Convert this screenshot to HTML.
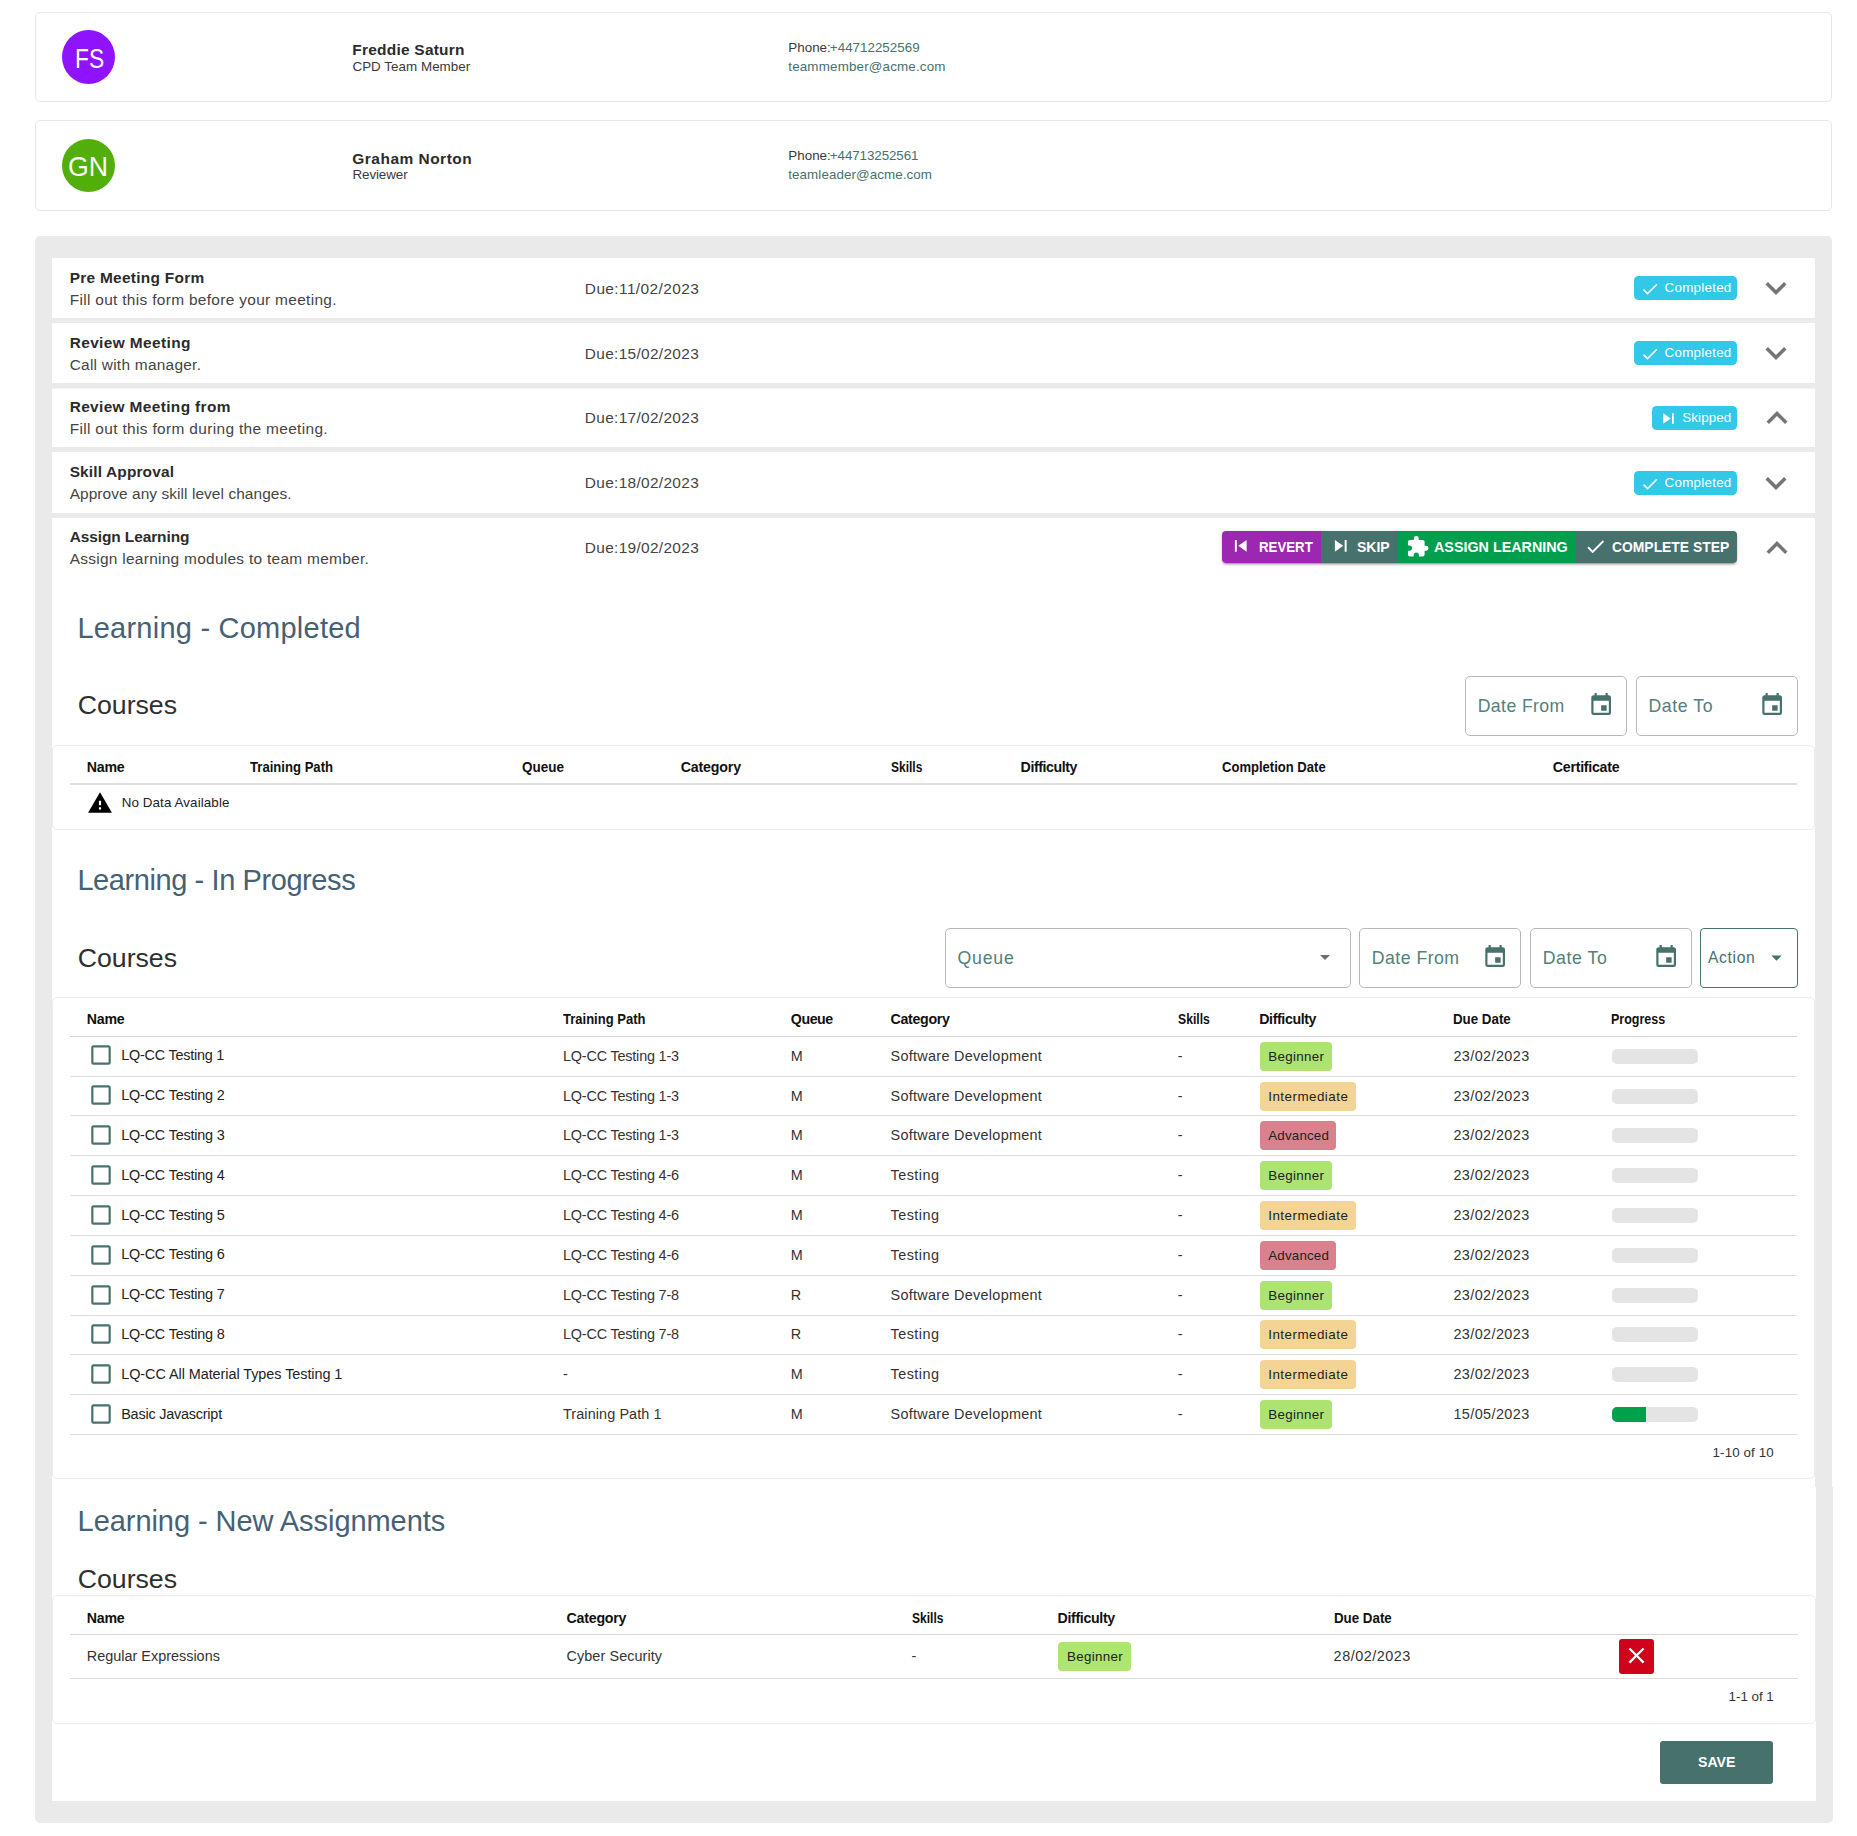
<!DOCTYPE html><html lang="en"><head><meta charset="utf-8"><title>CPD Review</title><style>
html,body{margin:0;padding:0;background:#fff}
body{width:1857px;height:1836px;position:relative;overflow:hidden;font-family:"Liberation Sans",sans-serif;}
.b{position:absolute;box-sizing:border-box}
.t{position:absolute;white-space:pre;line-height:1;margin:0;padding:0}
</style></head><body>
<div class="b" style="left:35px;top:12px;width:1797px;height:90px;background:#fff;border:1px solid #e7e7e7;border-radius:5px;"></div>
<div class="b" style="left:35px;top:120px;width:1797px;height:91px;background:#fff;border:1px solid #e7e7e7;border-radius:5px;"></div>
<div class="b" style="left:62px;top:30px;width:53px;height:54px;border-radius:50%;background:#9013fe;"></div>
<div class="b" style="left:62px;top:139px;width:53px;height:53px;border-radius:50%;background:#52ae0b;"></div>
<div class="b" style="left:35px;top:236px;width:1797px;height:1251px;background:#eaeaea;border-radius:5px 5px 0 0;"></div>
<div class="b" style="left:35px;top:1487px;width:1798px;height:336px;background:#eaeaea;border-radius:0 0 5px 5px;"></div>
<div class="b" style="left:52px;top:258px;width:1763px;height:60px;background:#fff;"></div>
<div class="b" style="left:52px;top:323px;width:1763px;height:60px;background:#fff;"></div>
<div class="b" style="left:52px;top:388px;width:1763px;height:59px;background:#fff;"></div>
<div class="b" style="left:52px;top:452px;width:1763px;height:61px;background:#fff;"></div>
<div class="b" style="left:52px;top:518px;width:1763px;height:1283px;background:#fff;"></div>
<div class="b" style="left:52px;top:1487px;width:1764px;height:314px;background:#fff;"></div>
<div class="b" style="left:52px;top:388px;width:1763px;height:1px;background:#f4f4f4;"></div>
<div class="b" style="left:1634px;top:276px;width:103px;height:24px;background:#32c8e8;border-radius:4.5px;"></div>
<svg class="b" style="left:1640.2px;top:278.5px;" width="20" height="20" viewBox="0 0 24 24"><path fill="#fff" d="M21,7L9,19L3.5,13.5L4.91,12.09L9,16.17L19.59,5.59L21,7Z"/></svg>
<svg class="b" style="left:1755px;top:267.4px;" width="42" height="42" viewBox="0 0 24 24"><path fill="#757575" d="M7.41,8.58L12,13.17L16.59,8.58L18,10L12,16L6,10L7.41,8.58Z"/></svg>
<div class="b" style="left:1634px;top:341px;width:103px;height:24px;background:#32c8e8;border-radius:4.5px;"></div>
<svg class="b" style="left:1640.2px;top:343.5px;" width="20" height="20" viewBox="0 0 24 24"><path fill="#fff" d="M21,7L9,19L3.5,13.5L4.91,12.09L9,16.17L19.59,5.59L21,7Z"/></svg>
<svg class="b" style="left:1755px;top:332.4px;" width="42" height="42" viewBox="0 0 24 24"><path fill="#757575" d="M7.41,8.58L12,13.17L16.59,8.58L18,10L12,16L6,10L7.41,8.58Z"/></svg>
<div class="b" style="left:1652px;top:406px;width:85px;height:24px;background:#32c8e8;border-radius:4.5px;"></div>
<svg class="b" style="left:1657.8px;top:407.5px;" width="21" height="21" viewBox="0 0 24 24"><path fill="#fff" d="M16,18H18V6H16M6,18L14.5,12L6,6V18Z"/></svg>
<svg class="b" style="left:1755.8px;top:396.7px;" width="42" height="42" viewBox="0 0 24 24"><path fill="#757575" d="M7.41,15.41L12,10.83L16.59,15.41L18,14L12,8L6,14L7.41,15.41Z"/></svg>
<div class="b" style="left:1634px;top:471px;width:103px;height:24px;background:#32c8e8;border-radius:4.5px;"></div>
<svg class="b" style="left:1640.2px;top:473.5px;" width="20" height="20" viewBox="0 0 24 24"><path fill="#fff" d="M21,7L9,19L3.5,13.5L4.91,12.09L9,16.17L19.59,5.59L21,7Z"/></svg>
<svg class="b" style="left:1755px;top:462.4px;" width="42" height="42" viewBox="0 0 24 24"><path fill="#757575" d="M7.41,8.58L12,13.17L16.59,8.58L18,10L12,16L6,10L7.41,8.58Z"/></svg>
<svg class="b" style="left:1755.8px;top:526.9px;" width="42" height="42" viewBox="0 0 24 24"><path fill="#757575" d="M7.41,15.41L12,10.83L16.59,15.41L18,14L12,8L6,14L7.41,15.41Z"/></svg>
<div class="b" style="left:1222px;top:531px;width:515px;height:32px;border-radius:4px;box-shadow:0 3px 1px -2px rgba(0,0,0,.2),0 2px 2px 0 rgba(0,0,0,.14),0 1px 5px 0 rgba(0,0,0,.12);"></div>
<div class="b" style="left:1222px;top:531px;width:99px;height:32px;background:#9c27b0;border-radius:4px 0 0 4px;"></div>
<div class="b" style="left:1321px;top:531px;width:77px;height:32px;background:#47716d;"></div>
<div class="b" style="left:1398px;top:531px;width:178px;height:32px;background:#009e4d;"></div>
<div class="b" style="left:1576px;top:531px;width:161px;height:32px;background:#47716d;border-radius:0 4px 4px 0;"></div>
<svg class="b" style="left:1229.3px;top:534.3px;" width="23.5" height="23.5" viewBox="0 0 24 24"><path fill="#fff" d="M6,18V6H8V18H6M9.5,12L18,6V18L9.5,12Z"/></svg>
<svg class="b" style="left:1328.6px;top:534.3px;" width="23.5" height="23.5" viewBox="0 0 24 24"><path fill="#fff" d="M16,18H18V6H16M6,18L14.5,12L6,6V18Z"/></svg>
<svg class="b" style="left:1406.2px;top:534.7px;" width="23.5" height="23.5" viewBox="0 0 24 24"><path fill="#fff" d="M20.5,11H19V7C19,5.89 18.1,5 17,5H13V3.5A2.5,2.5 0 0,0 10.5,1A2.5,2.5 0 0,0 8,3.5V5H4A2,2 0 0,0 2,7V10.8H3.5C5,10.8 6.2,12 6.2,13.5C6.2,15 5,16.2 3.5,16.2H2V20A2,2 0 0,0 4,22H7.8V20.5C7.8,19 9,17.8 10.5,17.8C12,17.8 13.2,19 13.2,20.5V22H17A2,2 0 0,0 19,20V16H20.5A2.5,2.5 0 0,0 23,13.5A2.5,2.5 0 0,0 20.5,11Z"/></svg>
<svg class="b" style="left:1584px;top:534.5px;" width="23" height="23" viewBox="0 0 24 24"><path fill="#fff" d="M21,7L9,19L3.5,13.5L4.91,12.09L9,16.17L19.59,5.59L21,7Z"/></svg>
<div class="b" style="left:1465px;top:676px;width:162px;height:60px;border:1px solid #b8b8b8;border-radius:5px;background:#fff;"></div>
<svg class="b" style="left:1588.2px;top:691.8px;" width="26.3" height="26.3" viewBox="0 0 24 24"><path fill="#47716d" d="M19,19H5V8H19M16,1V3H8V1H6V3H5C3.89,3 3,3.89 3,5V19A2,2 0 0,0 5,21H19A2,2 0 0,0 21,19V5C21,3.89 20.1,3 19,3H18V1M17,12H12V17H17V12Z"/></svg>
<div class="b" style="left:1636px;top:676px;width:162px;height:60px;border:1px solid #b8b8b8;border-radius:5px;background:#fff;"></div>
<svg class="b" style="left:1759.2px;top:691.8px;" width="26.3" height="26.3" viewBox="0 0 24 24"><path fill="#47716d" d="M19,19H5V8H19M16,1V3H8V1H6V3H5C3.89,3 3,3.89 3,5V19A2,2 0 0,0 5,21H19A2,2 0 0,0 21,19V5C21,3.89 20.1,3 19,3H18V1M17,12H12V17H17V12Z"/></svg>
<div class="b" style="left:52px;top:745px;width:1763px;height:85px;border:1px solid #ececec;border-radius:5px;background:#fff;"></div>
<div class="b" style="left:70px;top:783px;width:1727px;height:2px;background:#dedede;"></div>
<svg class="b" style="left:87.4px;top:789.6px;" width="26" height="26" viewBox="0 0 24 24"><path fill="#000" d="M13,14H11V10H13M13,18H11V16H13M1,21H23L12,2L1,21Z"/></svg>
<div class="b" style="left:945px;top:928px;width:406px;height:60px;border:1px solid #b8b8b8;border-radius:5px;background:#fff;"></div>
<svg class="b" style="left:1313px;top:944.7px;" width="24" height="24" viewBox="0 0 24 24"><path fill="#6e6e6e" d="M7,10L12,15L17,10H7Z"/></svg>
<div class="b" style="left:1359px;top:928px;width:162px;height:60px;border:1px solid #b8b8b8;border-radius:5px;background:#fff;"></div>
<svg class="b" style="left:1482.2px;top:943.8px;" width="26.3" height="26.3" viewBox="0 0 24 24"><path fill="#47716d" d="M19,19H5V8H19M16,1V3H8V1H6V3H5C3.89,3 3,3.89 3,5V19A2,2 0 0,0 5,21H19A2,2 0 0,0 21,19V5C21,3.89 20.1,3 19,3H18V1M17,12H12V17H17V12Z"/></svg>
<div class="b" style="left:1530px;top:928px;width:162px;height:60px;border:1px solid #b8b8b8;border-radius:5px;background:#fff;"></div>
<svg class="b" style="left:1653.2px;top:943.8px;" width="26.3" height="26.3" viewBox="0 0 24 24"><path fill="#47716d" d="M19,19H5V8H19M16,1V3H8V1H6V3H5C3.89,3 3,3.89 3,5V19A2,2 0 0,0 5,21H19A2,2 0 0,0 21,19V5C21,3.89 20.1,3 19,3H18V1M17,12H12V17H17V12Z"/></svg>
<div class="b" style="left:1700px;top:928px;width:98px;height:60px;border:1px solid #47716d;border-radius:4px;background:#fff;"></div>
<svg class="b" style="left:1763.8px;top:944.5px;" width="25" height="25" viewBox="0 0 24 24"><path fill="#47716d" d="M7,10L12,15L17,10H7Z"/></svg>
<div class="b" style="left:52px;top:997px;width:1763px;height:482px;border:1px solid #ececec;border-radius:5px;background:#fff;"></div>
<div class="b" style="left:70px;top:1036px;width:1727px;height:1px;background:#d4d4d4;"></div>
<div class="b" style="left:70px;top:1076px;width:1727px;height:1px;background:#dcdcdc;"></div>
<svg class="b" style="left:87.7px;top:1041.9px;" width="26" height="26" viewBox="0 0 24 24"><path fill="#47716d" d="M19,3H5C3.89,3 3,3.89 3,5V19A2,2 0 0,0 5,21H19A2,2 0 0,0 21,19V5C21,3.89 20.1,3 19,3M19,5V19H5V5H19Z"/></svg>
<div class="b" style="left:1260px;top:1042px;width:72px;height:29px;background:#ace371;border-radius:4px;"></div>
<div class="b" style="left:1612px;top:1049px;width:86px;height:15px;background:#e4e4e4;border-radius:5px;overflow:hidden;"></div>
<div class="b" style="left:70px;top:1115px;width:1727px;height:1px;background:#dcdcdc;"></div>
<svg class="b" style="left:87.7px;top:1081.8px;" width="26" height="26" viewBox="0 0 24 24"><path fill="#47716d" d="M19,3H5C3.89,3 3,3.89 3,5V19A2,2 0 0,0 5,21H19A2,2 0 0,0 21,19V5C21,3.89 20.1,3 19,3M19,5V19H5V5H19Z"/></svg>
<div class="b" style="left:1260px;top:1082px;width:96px;height:29px;background:#f3d494;border-radius:4px;"></div>
<div class="b" style="left:1612px;top:1089px;width:86px;height:15px;background:#e4e4e4;border-radius:5px;overflow:hidden;"></div>
<div class="b" style="left:70px;top:1155px;width:1727px;height:1px;background:#dcdcdc;"></div>
<svg class="b" style="left:87.7px;top:1121.8px;" width="26" height="26" viewBox="0 0 24 24"><path fill="#47716d" d="M19,3H5C3.89,3 3,3.89 3,5V19A2,2 0 0,0 5,21H19A2,2 0 0,0 21,19V5C21,3.89 20.1,3 19,3M19,5V19H5V5H19Z"/></svg>
<div class="b" style="left:1260px;top:1121px;width:76px;height:29px;background:#d9828d;border-radius:4px;"></div>
<div class="b" style="left:1612px;top:1128px;width:86px;height:15px;background:#e4e4e4;border-radius:5px;overflow:hidden;"></div>
<div class="b" style="left:70px;top:1195px;width:1727px;height:1px;background:#dcdcdc;"></div>
<svg class="b" style="left:87.7px;top:1161.7px;" width="26" height="26" viewBox="0 0 24 24"><path fill="#47716d" d="M19,3H5C3.89,3 3,3.89 3,5V19A2,2 0 0,0 5,21H19A2,2 0 0,0 21,19V5C21,3.89 20.1,3 19,3M19,5V19H5V5H19Z"/></svg>
<div class="b" style="left:1260px;top:1161px;width:72px;height:29px;background:#ace371;border-radius:4px;"></div>
<div class="b" style="left:1612px;top:1168px;width:86px;height:15px;background:#e4e4e4;border-radius:5px;overflow:hidden;"></div>
<div class="b" style="left:70px;top:1235px;width:1727px;height:1px;background:#dcdcdc;"></div>
<svg class="b" style="left:87.7px;top:1201.6px;" width="26" height="26" viewBox="0 0 24 24"><path fill="#47716d" d="M19,3H5C3.89,3 3,3.89 3,5V19A2,2 0 0,0 5,21H19A2,2 0 0,0 21,19V5C21,3.89 20.1,3 19,3M19,5V19H5V5H19Z"/></svg>
<div class="b" style="left:1260px;top:1201px;width:96px;height:29px;background:#f3d494;border-radius:4px;"></div>
<div class="b" style="left:1612px;top:1208px;width:86px;height:15px;background:#e4e4e4;border-radius:5px;overflow:hidden;"></div>
<div class="b" style="left:70px;top:1275px;width:1727px;height:1px;background:#dcdcdc;"></div>
<svg class="b" style="left:87.7px;top:1241.6px;" width="26" height="26" viewBox="0 0 24 24"><path fill="#47716d" d="M19,3H5C3.89,3 3,3.89 3,5V19A2,2 0 0,0 5,21H19A2,2 0 0,0 21,19V5C21,3.89 20.1,3 19,3M19,5V19H5V5H19Z"/></svg>
<div class="b" style="left:1260px;top:1241px;width:76px;height:29px;background:#d9828d;border-radius:4px;"></div>
<div class="b" style="left:1612px;top:1248px;width:86px;height:15px;background:#e4e4e4;border-radius:5px;overflow:hidden;"></div>
<div class="b" style="left:70px;top:1315px;width:1727px;height:1px;background:#dcdcdc;"></div>
<svg class="b" style="left:87.7px;top:1281.5px;" width="26" height="26" viewBox="0 0 24 24"><path fill="#47716d" d="M19,3H5C3.89,3 3,3.89 3,5V19A2,2 0 0,0 5,21H19A2,2 0 0,0 21,19V5C21,3.89 20.1,3 19,3M19,5V19H5V5H19Z"/></svg>
<div class="b" style="left:1260px;top:1281px;width:72px;height:29px;background:#ace371;border-radius:4px;"></div>
<div class="b" style="left:1612px;top:1288px;width:86px;height:15px;background:#e4e4e4;border-radius:5px;overflow:hidden;"></div>
<div class="b" style="left:70px;top:1354px;width:1727px;height:1px;background:#dcdcdc;"></div>
<svg class="b" style="left:87.7px;top:1321.4px;" width="26" height="26" viewBox="0 0 24 24"><path fill="#47716d" d="M19,3H5C3.89,3 3,3.89 3,5V19A2,2 0 0,0 5,21H19A2,2 0 0,0 21,19V5C21,3.89 20.1,3 19,3M19,5V19H5V5H19Z"/></svg>
<div class="b" style="left:1260px;top:1320px;width:96px;height:29px;background:#f3d494;border-radius:4px;"></div>
<div class="b" style="left:1612px;top:1327px;width:86px;height:15px;background:#e4e4e4;border-radius:5px;overflow:hidden;"></div>
<div class="b" style="left:70px;top:1394px;width:1727px;height:1px;background:#dcdcdc;"></div>
<svg class="b" style="left:87.7px;top:1361.3px;" width="26" height="26" viewBox="0 0 24 24"><path fill="#47716d" d="M19,3H5C3.89,3 3,3.89 3,5V19A2,2 0 0,0 5,21H19A2,2 0 0,0 21,19V5C21,3.89 20.1,3 19,3M19,5V19H5V5H19Z"/></svg>
<div class="b" style="left:1260px;top:1360px;width:96px;height:29px;background:#f3d494;border-radius:4px;"></div>
<div class="b" style="left:1612px;top:1367px;width:86px;height:15px;background:#e4e4e4;border-radius:5px;overflow:hidden;"></div>
<div class="b" style="left:70px;top:1434px;width:1727px;height:1px;background:#dcdcdc;"></div>
<svg class="b" style="left:87.7px;top:1401.3px;" width="26" height="26" viewBox="0 0 24 24"><path fill="#47716d" d="M19,3H5C3.89,3 3,3.89 3,5V19A2,2 0 0,0 5,21H19A2,2 0 0,0 21,19V5C21,3.89 20.1,3 19,3M19,5V19H5V5H19Z"/></svg>
<div class="b" style="left:1260px;top:1400px;width:72px;height:29px;background:#ace371;border-radius:4px;"></div>
<div class="b" style="left:1612px;top:1407px;width:86px;height:15px;background:#e4e4e4;border-radius:5px;overflow:hidden;"><div style="width:34px;height:100%;background:#00a04c"></div></div>
<div class="b" style="left:52px;top:1595px;width:1764px;height:129px;border:1px solid #ececec;border-radius:5px;background:#fff;"></div>
<div class="b" style="left:70px;top:1634px;width:1728px;height:1px;background:#d8d8d8;"></div>
<div class="b" style="left:1058px;top:1642px;width:73px;height:29px;background:#ace56f;border-radius:4px;"></div>
<div class="b" style="left:1619px;top:1639px;width:35px;height:35px;background:#d0021b;border-radius:3px;"></div>
<svg class="b" style="left:1622.6px;top:1642.4px;" width="27" height="27" viewBox="0 0 24 24"><path fill="#fff" d="M19,6.41L17.59,5L12,10.59L6.41,5L5,6.41L10.59,12L5,17.59L6.41,19L12,13.41L17.59,19L19,17.59L13.41,12L19,6.41Z"/></svg>
<div class="b" style="left:70px;top:1678px;width:1728px;height:1px;background:#dcdcdc;"></div>
<div class="b" style="left:1660px;top:1741px;width:113px;height:43px;background:#47716d;border-radius:3px;"></div>
<span class="t" style="left:74.98px;top:45.01px;font-size:27.6px;color:#fff;transform-origin:0 0;transform:scaleX(0.8248);">FS</span>
<span class="t" style="left:68.28px;top:153.01px;font-size:27.6px;color:#fff;transform-origin:0 0;transform:scaleX(0.9661);">GN</span>
<span class="t" style="left:352.35px;top:41.90px;font-size:15.45px;color:#2b2b2b;font-weight:700;letter-spacing:0.244px;">Freddie Saturn</span>
<span class="t" style="left:352.46px;top:60.01px;font-size:13.39px;color:#3a3a3a;letter-spacing:0.040px;">CPD Team Member</span>
<span class="t" style="left:788.26px;top:40.71px;font-size:13.39px;color:#3a3a3a;letter-spacing:0.027px;">Phone:</span>
<span class="t" style="left:829.86px;top:40.71px;font-size:13.39px;color:#47716d;letter-spacing:0.009px;">+44712252569</span>
<span class="t" style="left:788.26px;top:60.01px;font-size:13.39px;color:#47716d;letter-spacing:0.177px;">teammember@acme.com</span>
<span class="t" style="left:352.35px;top:150.90px;font-size:15.45px;color:#2b2b2b;font-weight:700;letter-spacing:0.507px;">Graham Norton</span>
<span class="t" style="left:352.46px;top:167.81px;font-size:13.39px;color:#3a3a3a;letter-spacing:-0.087px;">Reviewer</span>
<span class="t" style="left:788.26px;top:148.90px;font-size:13.39px;color:#3a3a3a;letter-spacing:0.027px;">Phone:</span>
<span class="t" style="left:829.86px;top:148.90px;font-size:13.39px;color:#47716d;letter-spacing:-0.091px;">+44713252561</span>
<span class="t" style="left:788.26px;top:167.81px;font-size:13.39px;color:#47716d;letter-spacing:0.086px;">teamleader@acme.com</span>
<span class="t" style="left:69.65px;top:269.70px;font-size:15.45px;color:#2b2b2b;font-weight:700;letter-spacing:0.275px;">Pre Meeting Form</span>
<span class="t" style="left:69.65px;top:291.81px;font-size:15.45px;color:#444;letter-spacing:0.318px;">Fill out this form before your meeting.</span>
<span class="t" style="left:584.85px;top:280.81px;font-size:15.45px;color:#444;letter-spacing:0.398px;">Due:11/02/2023</span>
<span class="t" style="left:69.65px;top:334.81px;font-size:15.45px;color:#2b2b2b;font-weight:700;letter-spacing:0.384px;">Review Meeting</span>
<span class="t" style="left:69.65px;top:356.90px;font-size:15.45px;color:#444;letter-spacing:0.253px;">Call with manager.</span>
<span class="t" style="left:584.85px;top:345.90px;font-size:15.45px;color:#444;letter-spacing:0.310px;">Due:15/02/2023</span>
<span class="t" style="left:69.65px;top:398.81px;font-size:15.45px;color:#2b2b2b;font-weight:700;letter-spacing:0.356px;">Review Meeting from</span>
<span class="t" style="left:69.65px;top:420.90px;font-size:15.45px;color:#444;letter-spacing:0.341px;">Fill out this form during the meeting.</span>
<span class="t" style="left:584.85px;top:409.90px;font-size:15.45px;color:#444;letter-spacing:0.310px;">Due:17/02/2023</span>
<span class="t" style="left:69.65px;top:463.76px;font-size:15.45px;color:#2b2b2b;font-weight:700;letter-spacing:0.149px;">Skill Approval</span>
<span class="t" style="left:69.65px;top:485.85px;font-size:15.45px;color:#444;letter-spacing:0.072px;">Approve any skill level changes.</span>
<span class="t" style="left:584.85px;top:474.85px;font-size:15.45px;color:#444;letter-spacing:0.310px;">Due:18/02/2023</span>
<span class="t" style="left:69.65px;top:528.81px;font-size:15.45px;color:#2b2b2b;font-weight:700;letter-spacing:-0.082px;">Assign Learning</span>
<span class="t" style="left:69.65px;top:550.90px;font-size:15.45px;color:#444;letter-spacing:0.284px;">Assign learning modules to team member.</span>
<span class="t" style="left:584.85px;top:539.90px;font-size:15.45px;color:#444;letter-spacing:0.310px;">Due:19/02/2023</span>
<span class="t" style="left:1664.56px;top:281.40px;font-size:13.39px;color:#fff;letter-spacing:0.257px;">Completed</span>
<span class="t" style="left:1664.56px;top:346.40px;font-size:13.39px;color:#fff;letter-spacing:0.257px;">Completed</span>
<span class="t" style="left:1682.16px;top:411.21px;font-size:13.39px;color:#fff;letter-spacing:0.133px;">Skipped</span>
<span class="t" style="left:1664.56px;top:476.40px;font-size:13.39px;color:#fff;letter-spacing:0.257px;">Completed</span>
<span class="t" style="left:1258.96px;top:538.60px;font-size:15.3px;color:#fff;font-weight:700;transform-origin:0 0;transform:scaleX(0.8669);">REVERT</span>
<span class="t" style="left:1357.46px;top:538.60px;font-size:15.3px;color:#fff;font-weight:700;transform-origin:0 0;transform:scaleX(0.9156);">SKIP</span>
<span class="t" style="left:1434.46px;top:538.60px;font-size:15.3px;color:#fff;font-weight:700;transform-origin:0 0;transform:scaleX(0.9363);">ASSIGN LEARNING</span>
<span class="t" style="left:1612.26px;top:538.60px;font-size:15.3px;color:#fff;font-weight:700;transform-origin:0 0;transform:scaleX(0.9071);">COMPLETE STEP</span>
<span class="t" style="left:77.41px;top:614.11px;font-size:29px;color:#466173;letter-spacing:0.230px;">Learning - Completed</span>
<span class="t" style="left:77.73px;top:692.31px;font-size:26.7px;color:#2f2f2f;letter-spacing:-0.017px;">Courses</span>
<span class="t" style="left:1477.73px;top:698.11px;font-size:17.7px;color:#52807a;letter-spacing:0.382px;">Date From</span>
<span class="t" style="left:1648.43px;top:698.11px;font-size:17.7px;color:#52807a;letter-spacing:0.593px;">Date To</span>
<span class="t" style="left:86.82px;top:760.20px;font-size:14.2px;color:#111;font-weight:700;letter-spacing:-0.270px;">Name</span>
<span class="t" style="left:250.02px;top:760.20px;font-size:14.2px;color:#111;font-weight:700;transform-origin:0 0;transform:scaleX(0.9240);">Training Path</span>
<span class="t" style="left:521.92px;top:760.20px;font-size:14.2px;color:#111;font-weight:700;transform-origin:0 0;transform:scaleX(0.9499);">Queue</span>
<span class="t" style="left:680.72px;top:760.20px;font-size:14.2px;color:#111;font-weight:700;letter-spacing:-0.165px;">Category</span>
<span class="t" style="left:890.52px;top:760.20px;font-size:14.2px;color:#111;font-weight:700;transform-origin:0 0;transform:scaleX(0.8454);">Skills</span>
<span class="t" style="left:1020.62px;top:760.20px;font-size:14.2px;color:#111;font-weight:700;letter-spacing:-0.440px;">Difficulty</span>
<span class="t" style="left:1221.82px;top:760.20px;font-size:14.2px;color:#111;font-weight:700;transform-origin:0 0;transform:scaleX(0.9195);">Completion Date</span>
<span class="t" style="left:1552.82px;top:760.20px;font-size:14.2px;color:#111;font-weight:700;letter-spacing:-0.264px;">Certificate</span>
<span class="t" style="left:121.66px;top:795.71px;font-size:13.39px;color:#222;letter-spacing:0.104px;">No Data Available</span>
<span class="t" style="left:77.41px;top:866.01px;font-size:29px;color:#466173;letter-spacing:-0.413px;">Learning - In Progress</span>
<span class="t" style="left:77.73px;top:945.31px;font-size:26.7px;color:#2f2f2f;letter-spacing:-0.017px;">Courses</span>
<span class="t" style="left:957.53px;top:950.00px;font-size:17.7px;color:#52807a;letter-spacing:0.773px;">Queue</span>
<span class="t" style="left:1371.83px;top:950.11px;font-size:17.7px;color:#52807a;letter-spacing:0.457px;">Date From</span>
<span class="t" style="left:1542.63px;top:950.11px;font-size:17.7px;color:#52807a;letter-spacing:0.593px;">Date To</span>
<span class="t" style="left:1708.04px;top:949.91px;font-size:15.7px;color:#47716d;letter-spacing:0.626px;">Action</span>
<span class="t" style="left:86.82px;top:1011.90px;font-size:14.2px;color:#111;font-weight:700;letter-spacing:-0.270px;">Name</span>
<span class="t" style="left:563.02px;top:1011.90px;font-size:14.2px;color:#111;font-weight:700;transform-origin:0 0;transform:scaleX(0.9173);">Training Path</span>
<span class="t" style="left:790.82px;top:1011.90px;font-size:14.2px;color:#111;font-weight:700;letter-spacing:-0.428px;">Queue</span>
<span class="t" style="left:890.52px;top:1011.90px;font-size:14.2px;color:#111;font-weight:700;letter-spacing:-0.293px;">Category</span>
<span class="t" style="left:1177.82px;top:1011.90px;font-size:14.2px;color:#111;font-weight:700;transform-origin:0 0;transform:scaleX(0.8589);">Skills</span>
<span class="t" style="left:1259.22px;top:1011.90px;font-size:14.2px;color:#111;font-weight:700;letter-spacing:-0.384px;">Difficulty</span>
<span class="t" style="left:1453.42px;top:1011.90px;font-size:14.2px;color:#111;font-weight:700;transform-origin:0 0;transform:scaleX(0.9390);">Due Date</span>
<span class="t" style="left:1611.22px;top:1011.90px;font-size:14.2px;color:#111;font-weight:700;transform-origin:0 0;transform:scaleX(0.8818);">Progress</span>
<span class="t" style="left:121.21px;top:1048.01px;font-size:14.42px;color:#222;letter-spacing:-0.226px;">LQ-CC Testing 1</span>
<span class="t" style="left:563.01px;top:1048.81px;font-size:14.42px;color:#333;letter-spacing:-0.186px;">LQ-CC Testing 1-3</span>
<span class="t" style="left:790.81px;top:1048.81px;font-size:14.42px;color:#333;">M</span>
<span class="t" style="left:890.51px;top:1048.81px;font-size:14.42px;color:#333;letter-spacing:0.296px;">Software Development</span>
<span class="t" style="left:1177.81px;top:1048.81px;font-size:14.42px;color:#333;">-</span>
<span class="t" style="left:1268.26px;top:1049.81px;font-size:13.39px;color:#222;letter-spacing:0.299px;">Beginner</span>
<span class="t" style="left:1453.41px;top:1048.81px;font-size:14.42px;color:#333;letter-spacing:0.407px;">23/02/2023</span>
<span class="t" style="left:121.21px;top:1087.89px;font-size:14.42px;color:#222;letter-spacing:-0.190px;">LQ-CC Testing 2</span>
<span class="t" style="left:563.01px;top:1088.59px;font-size:14.42px;color:#333;letter-spacing:-0.186px;">LQ-CC Testing 1-3</span>
<span class="t" style="left:790.81px;top:1088.59px;font-size:14.42px;color:#333;">M</span>
<span class="t" style="left:890.51px;top:1088.59px;font-size:14.42px;color:#333;letter-spacing:0.296px;">Software Development</span>
<span class="t" style="left:1177.81px;top:1088.59px;font-size:14.42px;color:#333;">-</span>
<span class="t" style="left:1268.26px;top:1089.60px;font-size:13.39px;color:#222;letter-spacing:0.480px;">Intermediate</span>
<span class="t" style="left:1453.41px;top:1088.59px;font-size:14.42px;color:#333;letter-spacing:0.407px;">23/02/2023</span>
<span class="t" style="left:121.21px;top:1127.76px;font-size:14.42px;color:#222;letter-spacing:-0.190px;">LQ-CC Testing 3</span>
<span class="t" style="left:563.01px;top:1128.39px;font-size:14.42px;color:#333;letter-spacing:-0.186px;">LQ-CC Testing 1-3</span>
<span class="t" style="left:790.81px;top:1128.39px;font-size:14.42px;color:#333;">M</span>
<span class="t" style="left:890.51px;top:1128.39px;font-size:14.42px;color:#333;letter-spacing:0.296px;">Software Development</span>
<span class="t" style="left:1177.81px;top:1128.39px;font-size:14.42px;color:#333;">-</span>
<span class="t" style="left:1268.26px;top:1129.38px;font-size:13.39px;color:#222;letter-spacing:0.163px;">Advanced</span>
<span class="t" style="left:1453.41px;top:1128.39px;font-size:14.42px;color:#333;letter-spacing:0.407px;">23/02/2023</span>
<span class="t" style="left:121.21px;top:1167.65px;font-size:14.42px;color:#222;letter-spacing:-0.190px;">LQ-CC Testing 4</span>
<span class="t" style="left:563.01px;top:1168.18px;font-size:14.42px;color:#333;letter-spacing:-0.186px;">LQ-CC Testing 4-6</span>
<span class="t" style="left:790.81px;top:1168.18px;font-size:14.42px;color:#333;">M</span>
<span class="t" style="left:890.51px;top:1168.18px;font-size:14.42px;color:#333;letter-spacing:0.486px;">Testing</span>
<span class="t" style="left:1177.81px;top:1168.18px;font-size:14.42px;color:#333;">-</span>
<span class="t" style="left:1268.26px;top:1169.18px;font-size:13.39px;color:#222;letter-spacing:0.299px;">Beginner</span>
<span class="t" style="left:1453.41px;top:1168.18px;font-size:14.42px;color:#333;letter-spacing:0.407px;">23/02/2023</span>
<span class="t" style="left:121.21px;top:1207.53px;font-size:14.42px;color:#222;letter-spacing:-0.190px;">LQ-CC Testing 5</span>
<span class="t" style="left:563.01px;top:1207.98px;font-size:14.42px;color:#333;letter-spacing:-0.186px;">LQ-CC Testing 4-6</span>
<span class="t" style="left:790.81px;top:1207.98px;font-size:14.42px;color:#333;">M</span>
<span class="t" style="left:890.51px;top:1207.98px;font-size:14.42px;color:#333;letter-spacing:0.486px;">Testing</span>
<span class="t" style="left:1177.81px;top:1207.98px;font-size:14.42px;color:#333;">-</span>
<span class="t" style="left:1268.26px;top:1208.96px;font-size:13.39px;color:#222;letter-spacing:0.480px;">Intermediate</span>
<span class="t" style="left:1453.41px;top:1207.98px;font-size:14.42px;color:#333;letter-spacing:0.407px;">23/02/2023</span>
<span class="t" style="left:121.21px;top:1247.42px;font-size:14.42px;color:#222;letter-spacing:-0.190px;">LQ-CC Testing 6</span>
<span class="t" style="left:563.01px;top:1247.76px;font-size:14.42px;color:#333;letter-spacing:-0.186px;">LQ-CC Testing 4-6</span>
<span class="t" style="left:790.81px;top:1247.76px;font-size:14.42px;color:#333;">M</span>
<span class="t" style="left:890.51px;top:1247.76px;font-size:14.42px;color:#333;letter-spacing:0.486px;">Testing</span>
<span class="t" style="left:1177.81px;top:1247.76px;font-size:14.42px;color:#333;">-</span>
<span class="t" style="left:1268.26px;top:1248.76px;font-size:13.39px;color:#222;letter-spacing:0.163px;">Advanced</span>
<span class="t" style="left:1453.41px;top:1247.76px;font-size:14.42px;color:#333;letter-spacing:0.407px;">23/02/2023</span>
<span class="t" style="left:121.21px;top:1287.29px;font-size:14.42px;color:#222;letter-spacing:-0.190px;">LQ-CC Testing 7</span>
<span class="t" style="left:563.01px;top:1287.56px;font-size:14.42px;color:#333;letter-spacing:-0.186px;">LQ-CC Testing 7-8</span>
<span class="t" style="left:790.81px;top:1287.56px;font-size:14.42px;color:#333;">R</span>
<span class="t" style="left:890.51px;top:1287.56px;font-size:14.42px;color:#333;letter-spacing:0.296px;">Software Development</span>
<span class="t" style="left:1177.81px;top:1287.56px;font-size:14.42px;color:#333;">-</span>
<span class="t" style="left:1268.26px;top:1288.54px;font-size:13.39px;color:#222;letter-spacing:0.299px;">Beginner</span>
<span class="t" style="left:1453.41px;top:1287.56px;font-size:14.42px;color:#333;letter-spacing:0.407px;">23/02/2023</span>
<span class="t" style="left:121.21px;top:1327.17px;font-size:14.42px;color:#222;letter-spacing:-0.190px;">LQ-CC Testing 8</span>
<span class="t" style="left:563.01px;top:1327.34px;font-size:14.42px;color:#333;letter-spacing:-0.186px;">LQ-CC Testing 7-8</span>
<span class="t" style="left:790.81px;top:1327.34px;font-size:14.42px;color:#333;">R</span>
<span class="t" style="left:890.51px;top:1327.34px;font-size:14.42px;color:#333;letter-spacing:0.486px;">Testing</span>
<span class="t" style="left:1177.81px;top:1327.34px;font-size:14.42px;color:#333;">-</span>
<span class="t" style="left:1268.26px;top:1328.34px;font-size:13.39px;color:#222;letter-spacing:0.480px;">Intermediate</span>
<span class="t" style="left:1453.41px;top:1327.34px;font-size:14.42px;color:#333;letter-spacing:0.407px;">23/02/2023</span>
<span class="t" style="left:121.21px;top:1367.06px;font-size:14.42px;color:#222;letter-spacing:-0.051px;">LQ-CC All Material Types Testing 1</span>
<span class="t" style="left:563.01px;top:1367.12px;font-size:14.42px;color:#333;">-</span>
<span class="t" style="left:790.81px;top:1367.12px;font-size:14.42px;color:#333;">M</span>
<span class="t" style="left:890.51px;top:1367.12px;font-size:14.42px;color:#333;letter-spacing:0.486px;">Testing</span>
<span class="t" style="left:1177.81px;top:1367.12px;font-size:14.42px;color:#333;">-</span>
<span class="t" style="left:1268.26px;top:1368.12px;font-size:13.39px;color:#222;letter-spacing:0.480px;">Intermediate</span>
<span class="t" style="left:1453.41px;top:1367.12px;font-size:14.42px;color:#333;letter-spacing:0.407px;">23/02/2023</span>
<span class="t" style="left:121.21px;top:1406.93px;font-size:14.42px;color:#222;letter-spacing:-0.208px;">Basic Javascript</span>
<span class="t" style="left:563.01px;top:1406.92px;font-size:14.42px;color:#333;letter-spacing:0.100px;">Training Path 1</span>
<span class="t" style="left:790.81px;top:1406.92px;font-size:14.42px;color:#333;">M</span>
<span class="t" style="left:890.51px;top:1406.92px;font-size:14.42px;color:#333;letter-spacing:0.296px;">Software Development</span>
<span class="t" style="left:1177.81px;top:1406.92px;font-size:14.42px;color:#333;">-</span>
<span class="t" style="left:1268.26px;top:1407.92px;font-size:13.39px;color:#222;letter-spacing:0.299px;">Beginner</span>
<span class="t" style="left:1453.41px;top:1406.92px;font-size:14.42px;color:#333;letter-spacing:0.407px;">15/05/2023</span>
<span class="t" style="left:1712.56px;top:1445.90px;font-size:13.39px;color:#333;letter-spacing:0.101px;">1-10 of 10</span>
<span class="t" style="left:77.61px;top:1507.01px;font-size:29px;color:#466173;letter-spacing:-0.059px;">Learning - New Assignments</span>
<span class="t" style="left:77.73px;top:1565.51px;font-size:26.7px;color:#2f2f2f;letter-spacing:-0.017px;">Courses</span>
<span class="t" style="left:86.82px;top:1610.90px;font-size:14.2px;color:#111;font-weight:700;letter-spacing:-0.270px;">Name</span>
<span class="t" style="left:566.52px;top:1610.90px;font-size:14.2px;color:#111;font-weight:700;letter-spacing:-0.222px;">Category</span>
<span class="t" style="left:911.52px;top:1610.90px;font-size:14.2px;color:#111;font-weight:700;transform-origin:0 0;transform:scaleX(0.8481);">Skills</span>
<span class="t" style="left:1057.52px;top:1610.90px;font-size:14.2px;color:#111;font-weight:700;letter-spacing:-0.329px;">Difficulty</span>
<span class="t" style="left:1333.62px;top:1610.90px;font-size:14.2px;color:#111;font-weight:700;transform-origin:0 0;transform:scaleX(0.9390);">Due Date</span>
<span class="t" style="left:86.81px;top:1648.51px;font-size:14.42px;color:#333;letter-spacing:0.008px;">Regular Expressions</span>
<span class="t" style="left:566.51px;top:1648.51px;font-size:14.42px;color:#333;letter-spacing:0.084px;">Cyber Security</span>
<span class="t" style="left:911.51px;top:1648.51px;font-size:14.42px;color:#333;">-</span>
<span class="t" style="left:1067.06px;top:1649.51px;font-size:13.39px;color:#222;letter-spacing:0.299px;">Beginner</span>
<span class="t" style="left:1333.61px;top:1648.51px;font-size:14.42px;color:#333;letter-spacing:0.518px;">28/02/2023</span>
<span class="t" style="left:1728.56px;top:1689.60px;font-size:13.39px;color:#333;letter-spacing:-0.031px;">1-1 of 1</span>
<span class="t" style="left:1697.96px;top:1753.92px;font-size:15.3px;color:#fff;font-weight:700;transform-origin:0 0;transform:scaleX(0.9249);">SAVE</span>
</body></html>
